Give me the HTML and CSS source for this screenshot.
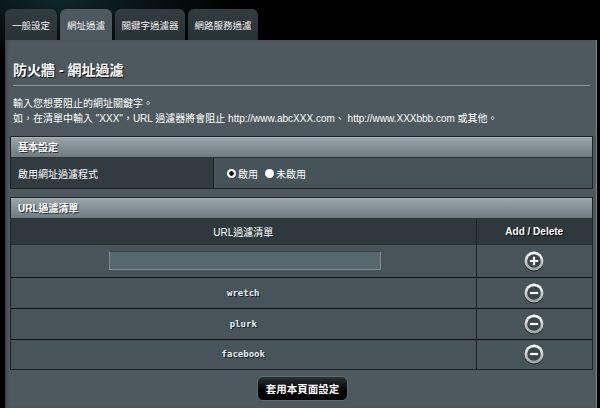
FILE: index.html
```html
<!DOCTYPE html>
<html lang="zh-Hant">
  <head>
    <meta charset="UTF-8" />
    <meta name="viewport" content="width=device-width, initial-scale=1.0" />
    <title>網址過濾</title>
    <link rel="stylesheet" href="styles.css">
  </head>
  <body>
    <div class="tabs">
      <div class="tab">一般設定</div>
      <div class="tab active">網址過濾</div>
      <div class="tab">關鍵字過濾器</div>
      <div class="tab">網路服務過濾</div>
    </div>
    <div class="panel">
      <h1 class="title">防火牆 - 網址過濾</h1>
      <div class="divider"></div>
      <p class="desc">
        輸入您想要阻止的網址關鍵字。<br />
        如，在清單中輸入 "XXX"，URL 過濾器將會阻止 http://www.abcXXX.com、 http://www.XXXbbb.com 或其他。
      </p>

      <div class="section">
        <div class="section-head">基本設定</div>
        <div class="row">
          <div class="label">啟用網址過濾程式</div>
          <div class="value">
            <span class="radio"><span class="dot on"></span>啟用</span>
            <span class="radio"><span class="dot"></span>未啟用</span>
          </div>
        </div>
      </div>

      <div class="section second">
        <div class="section-head">URL過濾清單</div>
        <table class="list">
          <tr class="col-head">
            <th>URL過濾清單</th>
            <th class="act">Add / Delete</th>
          </tr>
          <tr class="add-row">
            <td><input class="url-input" type="text" /></td>
            <td class="act">
              <svg class="icon" width="20" height="20" viewBox="0 0 20 20">
                <defs>
                  <linearGradient id="ringA" x1="0" y1="0" x2="0" y2="1">
                    <stop offset="0" stop-color="#ffffff" />
                    <stop offset="1" stop-color="#9a9fa2" />
                  </linearGradient>
                </defs>
                <circle cx="10" cy="10" r="9.5" fill="url(#ringA)" />
                <circle cx="10" cy="10" r="6.8" fill="#3b4448" />
                <path d="M10 5.8v8.4M5.8 10h8.4" stroke="#fff" stroke-width="2.2" />
              </svg>
            </td>
          </tr>
          <tr class="item">
            <td>wretch</td>
            <td class="act">
              <svg class="icon" width="20" height="20" viewBox="0 0 20 20">
                <circle cx="10" cy="10" r="9.5" fill="url(#ringA)" />
                <circle cx="10" cy="10" r="6.8" fill="#3b4448" />
                <path d="M5.8 10h8.4" stroke="#fff" stroke-width="2.2" />
              </svg>
            </td>
          </tr>
          <tr class="item">
            <td>plurk</td>
            <td class="act">
              <svg class="icon" width="20" height="20" viewBox="0 0 20 20">
                <circle cx="10" cy="10" r="9.5" fill="url(#ringA)" />
                <circle cx="10" cy="10" r="6.8" fill="#3b4448" />
                <path d="M5.8 10h8.4" stroke="#fff" stroke-width="2.2" />
              </svg>
            </td>
          </tr>
          <tr class="item last">
            <td>facebook</td>
            <td class="act">
              <svg class="icon" width="20" height="20" viewBox="0 0 20 20">
                <circle cx="10" cy="10" r="9.5" fill="url(#ringA)" />
                <circle cx="10" cy="10" r="6.8" fill="#3b4448" />
                <path d="M5.8 10h8.4" stroke="#fff" stroke-width="2.2" />
              </svg>
            </td>
          </tr>
        </table>
      </div>

      <div class="actions">
        <button class="apply">套用本頁面設定</button>
      </div>
    </div>
  </body>
</html>
```

FILE: styles.css
```css
* {
  margin: 0;
  padding: 0;
  box-sizing: border-box;
}
body {
  width: 600px;
  height: 408px;
  overflow: hidden;
  background: radial-gradient(ellipse 180px 60px at 60px 0, #10262b, #000 100%);
  font-family: "Liberation Sans", "Noto Sans CJK TC", sans-serif;
  font-size: 10px;
  color: #fff;
}
.tabs {
  display: flex;
  gap: 3px;
  padding: 9px 0 0 5px;
  height: 40px;
}
.tab {
  width: 52px;
  height: 31px;
  display: flex;
  align-items: center;
  justify-content: center;
  background: linear-gradient(#333d41, #283135);
  border-radius: 6px 6px 0 0;
  font-size: 9.5px;
  color: #f2f2f2;
}
.tab:nth-child(3),
.tab:nth-child(4) {
  width: 70px;
}
.tab.active {
  background: #4d595e;
}
.panel {
  margin-left: 5px;
  width: 592px;
  height: 368px;
  background: #4d595e;
  border-right: 1px solid #7b878b;
  padding: 22px 3px 0 5px;
  box-shadow: inset 3px 0 3px -2px #2b3437;
}
.title {
  margin-left: 3px;
  font-size: 14px;
  line-height: 16px;
  font-weight: bold;
  text-shadow: 1px 1px 0 #111;
}
.divider {
  margin: 7px 3px 0 3px;
  height: 1px;
  background: #8a9498;
}
.desc {
  margin: 10px 0 0 3px;
  line-height: 15px;
  font-size: 10px;
}
.section {
  margin-top: 10px;
  border: 1px solid #1c2225;
}
.section.second {
  margin-top: 8px;
}
.section-head {
  height: 21px;
  line-height: 20px;
  padding-left: 7px;
  background: linear-gradient(#97a3a7, #6e7c82);
  border-top: 1px solid #aab4b8;
  border-bottom: 1px solid #2a3236;
  font-weight: bold;
  text-shadow: 1px 1px 0 #2a3236;
}
.row {
  display: flex;
  height: 30px;
}
.label {
  width: 203px;
  background: #313b40;
  border-right: 1px solid #1c2225;
  padding-left: 7px;
  display: flex;
  align-items: center;
}
.value {
  flex-grow: 1;
  background: #465459;
  display: flex;
  align-items: center;
  padding-left: 13px;
  gap: 7px;
}
.radio {
  display: flex;
  align-items: center;
  gap: 2px;
}
.dot {
  width: 9px;
  height: 9px;
  border-radius: 50%;
  background: #fff;
}
.dot.on {
  background: radial-gradient(circle, #111 0 2px, #fff 2.5px);
}
.list {
  width: 100%;
  border-collapse: collapse;
}
.list td,
.list th {
  border-top: 1px solid #111;
  text-align: center;
  padding: 0;
}
.list .act {
  width: 116px;
  border-left: 1px solid #1c2225;
}
.col-head th {
  height: 25px;
  background: #2f393d;
  font-weight: normal;
  border-top: none;
}
.col-head th.act {
  font-weight: bold;
  font-family: "Liberation Sans", sans-serif;
  text-shadow: 1px 1px 0 #000;
}
.add-row td {
  height: 33px;
  background: #475459;
  border-top: 1px solid #2a3236;
}
.url-input {
  display: block;
  margin-left: 98px;
  width: 272px;
  height: 19px;
  background: #56676d;
  border: 1px solid #7e8b90;
  border-top-color: #3a4549;
}
.item td {
  height: 31px;
  background: #475459;
  font-family: "DejaVu Sans Mono", monospace;
  font-weight: bold;
  font-size: 9px;
  color: #e6eef6;
  text-shadow: 1px 1px 0 #1b2225;
}
.item.last td {
  height: 30px;
}
.icon {
  display: block;
  margin: 0 auto;
  filter: drop-shadow(0 1px 0 #1e2427);
}
.actions {
  display: flex;
  justify-content: center;
  padding-top: 6px;
}
.apply {
  width: 91px;
  height: 25px;
  border-radius: 6px;
  border: 1px solid #5f6a6e;
  background: linear-gradient(#2a3336, #000 60%);
  color: #fff;
  font-family: "Noto Sans CJK TC", sans-serif;
  font-size: 10.5px;
  font-weight: bold;
  margin-left: 2px;
}
```
